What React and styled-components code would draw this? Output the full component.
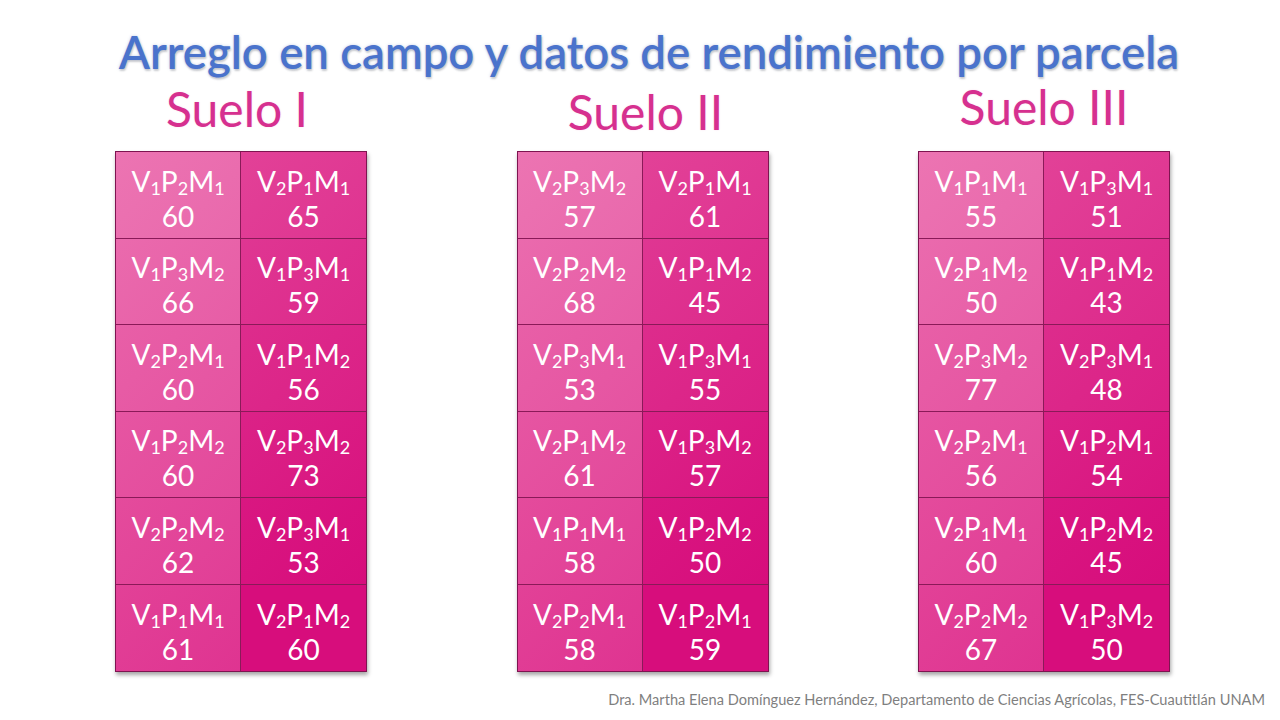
import styled, { createGlobalStyle } from 'styled-components';

const GlobalStyle = createGlobalStyle`
  html, body {
    margin: 0;
    padding: 0;
    background: #ffffff;
  }
  body {
    font-family: Lato, "Open Sans", "Liberation Sans", sans-serif;
  }
`;

const Slide = styled.div`
  width: 1280px;
  height: 720px;
  display: flex;
  flex-direction: column;
  background: #ffffff;
  overflow: hidden;
`;

const Title = styled.h1`
  margin: 26px 0 0 18px;
  text-align: center;
  font-size: 45.5px;
  line-height: 52px;
  font-weight: 600;
  color: #4a73cc;
  text-shadow: 0 0 3px rgba(90, 120, 190, 0.35), 1px 2px 2px rgba(0, 0, 0, 0.18);
`;

const Columns = styled.div`
  display: grid;
  grid-template-columns: repeat(3, 252px);
  column-gap: 149.5px;
  padding-left: 115px;
`;

const Column = styled.section`
  display: flex;
  flex-direction: column;
  align-items: center;
`;

const HeaderSlot = styled.div`
  height: 73px;
  width: 100%;
  display: flex;
  justify-content: center;
`;

const SoilName = styled.h2`
  margin: ${(p) => 6 + p.$dy}px 0 0 ${(p) => p.$dx}px;
  font-size: 48px;
  line-height: 56px;
  font-weight: 400;
  color: #d6308f;
  text-shadow: 0 0 2px rgba(214, 48, 143, 0.15);
`;

const Table = styled.div`
  display: grid;
  grid-template-columns: 125px 125px;
  grid-auto-rows: 86.5px;
  border: 1px solid #7e1450;
  box-shadow: 1px 3px 4px rgba(0, 0, 0, 0.35);
`;

const mix = (a, b, t) => {
  const ca = [1, 3, 5].map((i) => parseInt(a.slice(i, i + 2), 16));
  const cb = [1, 3, 5].map((i) => parseInt(b.slice(i, i + 2), 16));
  return `rgb(${ca.map((v, i) => Math.round(v + (cb[i] - v) * t)).join(',')})`;
};

const LIGHT = '#ec74b2';
const DARK = '#d70d7c';

const Cell = styled.div`
  box-sizing: border-box;
  border-right: ${(p) => (p.$col === 0 ? '1px solid #8a1a58' : 'none')};
  border-bottom: ${(p) => (p.$row < 5 ? '1px solid #8a1a58' : 'none')};
  background: ${(p) => {
    const t = p.$row * 0.1 + p.$col * 0.5;
    return `linear-gradient(135deg, ${mix(LIGHT, DARK, t)}, ${mix(LIGHT, DARK, Math.min(1, t + 0.12))})`;
  }};
  color: #ffffff;
  display: flex;
  flex-direction: column;
  align-items: center;
  justify-content: center;
  padding-top: 7px;
  font-size: 28px;
  line-height: 34px;
`;

const Code = styled.div`
  white-space: nowrap;
  padding-bottom: 1px;
`;

const Sub = styled.sub`
  font-size: 18px;
  line-height: 0;
  vertical-align: -3px;
`;

const Value = styled.div``;

const Footer = styled.div`
  margin-top: auto;
  margin-bottom: 12px;
  align-self: flex-end;
  padding-right: 15px;
  font-size: 14.6px;
  color: #7f7f7f;
`;

const soils = [
  {
    name: 'Suelo I',
    dx: -8,
    dy: -3,
    cells: [
      ['121', 60], ['211', 65],
      ['132', 66], ['131', 59],
      ['221', 60], ['112', 56],
      ['122', 60], ['232', 73],
      ['222', 62], ['231', 53],
      ['111', 61], ['212', 60],
    ],
  },
  {
    name: 'Suelo II',
    dx: 6,
    dy: 0,
    cells: [
      ['232', 57], ['211', 61],
      ['222', 68], ['112', 45],
      ['231', 53], ['131', 55],
      ['212', 61], ['132', 57],
      ['111', 58], ['122', 50],
      ['221', 58], ['121', 59],
    ],
  },
  {
    name: 'Suelo III',
    dx: 0,
    dy: -5,
    cells: [
      ['111', 55], ['131', 51],
      ['212', 50], ['112', 43],
      ['232', 77], ['231', 48],
      ['221', 56], ['121', 54],
      ['211', 60], ['122', 45],
      ['222', 67], ['132', 50],
    ],
  },
];

const Treatment = ({ code }) => (
  <Code>
    V<Sub>{code[0]}</Sub>P<Sub>{code[1]}</Sub>M<Sub>{code[2]}</Sub>
  </Code>
);

const App = () => {
  return (
    <Slide>
      <GlobalStyle />
      <Title>Arreglo en campo y datos de rendimiento por parcela</Title>
      <Columns>
        {soils.map((soil) => (
          <Column key={soil.name}>
            <HeaderSlot>
              <SoilName $dx={soil.dx} $dy={soil.dy}>{soil.name}</SoilName>
            </HeaderSlot>
            <Table>
              {soil.cells.map(([code, value], i) => (
                <Cell key={i} $row={Math.floor(i / 2)} $col={i % 2}>
                  <Treatment code={code} />
                  <Value>{value}</Value>
                </Cell>
              ))}
            </Table>
          </Column>
        ))}
      </Columns>
      <Footer>
        Dra. Martha Elena Domínguez Hernández, Departamento de Ciencias Agrícolas, FES-Cuautitlán UNAM
      </Footer>
    </Slide>
  );
};

export default App;
